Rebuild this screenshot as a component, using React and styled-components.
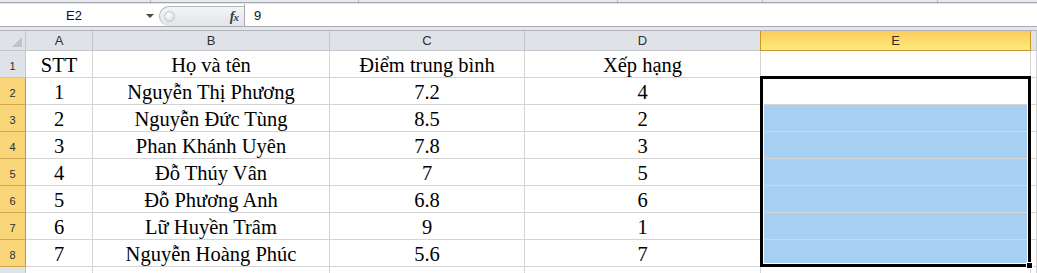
import React from 'react';
import styled, { createGlobalStyle } from 'styled-components';

const Global = createGlobalStyle`
  html, body { margin: 0; padding: 0; background: #fff; overflow: hidden; }
  body { width: 1037px; height: 273px; font-family: "Liberation Sans", Arial, sans-serif; }
  * { box-sizing: border-box; }
`;

const Page = styled.div`
  width: 1037px;
  height: 273px;
  overflow: hidden;
  display: flex;
  flex-direction: column;
  background: #e3e6ea;
`;

const Ribbon = styled.div`
  height: 3px;
  flex: none;
  display: flex;
  background: #e6e9ed;
  border-bottom: 1px solid #a3a6aa;
`;

const RibbonSep = styled.div`
  width: ${p => p.$w}px;
  flex: none;
  border-right: 1px solid #b3b6ba;
`;

const FormulaRow = styled.div`
  height: 23px;
  margin-top: 1px;
  flex: none;
  display: flex;
  background: #fff;
  border-bottom: 1px solid #a8abaf;
`;

const NameBox = styled.div`
  width: 159px;
  flex: none;
  display: flex;
  align-items: center;
  font-size: 13px;
  color: #111;
`;

const NameText = styled.span`
  width: 146px;
  text-align: center;
  padding-left: 2px;
`;

const Arrow = styled.span`
  width: 0;
  height: 0;
  border-left: 4px solid transparent;
  border-right: 4px solid transparent;
  border-top: 4px solid #4a4a4a;
  margin-top: 1px;
`;

const Gripper = styled.div`
  width: 85px;
  flex: none;
  align-self: flex-end;
  height: 20px;
  display: flex;
  align-items: center;
  background: linear-gradient(#f3f4f6, #e3e5e8);
  border: 1px solid #b4b7bb;
  border-bottom: none;
  border-right: none;
  border-radius: 10px 0 0 10px;
`;

const Dot = styled.span`
  width: 11px;
  height: 11px;
  margin-left: 4px;
  border-radius: 50%;
  background: radial-gradient(circle at 40% 35%, #ffffff, #cfd2d6);
  border: 1px solid #c4c7cb;
`;

const Fx = styled.span`
  margin-left: auto;
  margin-right: 6px;
  font-family: "Liberation Serif", "Times New Roman", serif;
  font-style: italic;
  font-weight: bold;
  font-size: 14px;
  color: #3a3a3a;
  letter-spacing: -1px;
`;

const FxSub = styled.span`
  font-size: 11px;
`;

const FormulaInput = styled.div`
  flex: 1;
  display: flex;
  align-items: center;
  padding-left: 9px;
  border-left: 1px solid #a8abaf;
  font-size: 13px;
  color: #111;
`;

const Gap = styled.div`
  height: 3px;
  flex: none;
`;

const Grid = styled.div`
  position: relative;
  flex: none;
  display: grid;
  grid-template-columns: 26px 67px 237px 195px 236px 270px 1fr;
  grid-template-rows: 20px;
  grid-auto-rows: 27px;
  border-top: 1px solid #b0b4b9;
  background: #fff;
`;

const Corner = styled.div`
  background: #dfe3e8;
  border-right: 1px solid #c3c7cc;
  border-bottom: 1px solid #c3c7cc;
  display: flex;
  align-items: flex-end;
  justify-content: flex-end;
  padding: 0 3px 3px 0;
`;

const CornerTri = styled.span`
  width: 0;
  height: 0;
  border-left: 10px solid transparent;
  border-bottom: 10px solid #bfc3c8;
`;

const ColHead = styled.div`
  display: flex;
  align-items: center;
  justify-content: center;
  font-size: 13px;
  color: ${p => (p.$sel ? '#3a2b1a' : '#2e2e2e')};
  background: ${p => (p.$sel ? 'linear-gradient(#f9cc5b, #feea7c)' : '#dfe3e8')};
  border-right: 1px solid ${p => (p.$sel ? '#c8952f' : '#c3c7cc')};
  border-bottom: 1px solid ${p => (p.$sel ? '#c8952f' : '#c3c7cc')};
  ${p => (p.$sel ? 'border-left: 1px solid #c8952f; margin-left: -1px;' : '')}
`;

const RowHead = styled.div`
  display: flex;
  align-items: flex-end;
  justify-content: center;
  padding-bottom: 5px;
  font-size: 11px;
  color: #2e2e2e;
  background: ${p => (p.$sel ? '#f9d67a' : '#dfe3e8')};
  border-right: 1px solid ${p => (p.$sel ? '#c8952f' : '#c3c7cc')};
  border-bottom: 1px solid ${p => (p.$sel ? '#d3a64a' : '#c3c7cc')};
`;

const Cell = styled.div`
  display: flex;
  align-items: center;
  justify-content: center;
  padding-top: 2px;
  font-family: "Liberation Serif", "Times New Roman", serif;
  font-size: 20.5px;
  color: #000;
  white-space: nowrap;
  background: ${p => (p.$fill ? '#a6cff1' : '#fff')};
  border-right: 1px solid #d4d4d4;
  border-bottom: 1px solid #d4d4d4;
`;

const Selection = styled.div`
  position: absolute;
  left: 760px;
  top: 45px;
  width: 271px;
  height: 191px;
  border: 3px solid #000;
  box-shadow: inset 0 0 0 1px #fff;
  pointer-events: none;
`;

const FillHandle = styled.span`
  position: absolute;
  right: -5px;
  bottom: -5px;
  width: 7px;
  height: 7px;
  background: #000;
  border: 1px solid #fff;
`;

const headers = ['A', 'B', 'C', 'D', 'E', ''];

const rows = [
  ['STT', 'Họ và tên', 'Điểm trung bình', 'Xếp hạng'],
  ['1', 'Nguyễn Thị Phương', '7.2', '4'],
  ['2', 'Nguyễn Đức Tùng', '8.5', '2'],
  ['3', 'Phan Khánh Uyên', '7.8', '3'],
  ['4', 'Đỗ Thúy Vân', '7', '5'],
  ['5', 'Đỗ Phương Anh', '6.8', '6'],
  ['6', 'Lữ Huyền Trâm', '9', '1'],
  ['7', 'Nguyễn Hoàng Phúc', '5.6', '7'],
  ['', '', '', ''],
];

export default function App() {
  return (
    <Page>
      <Global />
      <Ribbon>
        <RibbonSep $w={151} />
        <RibbonSep $w={208} />
        <RibbonSep $w={259} />
        <RibbonSep $w={145} />
        <RibbonSep $w={175} />
      </Ribbon>
      <FormulaRow>
        <NameBox>
          <NameText>E2</NameText>
          <Arrow />
        </NameBox>
        <Gripper>
          <Dot />
          <Fx>
            f<FxSub>x</FxSub>
          </Fx>
        </Gripper>
        <FormulaInput>9</FormulaInput>
      </FormulaRow>
      <Gap />
      <Grid>
        <Corner>
          <CornerTri />
        </Corner>
        {headers.map((h, i) => (
          <ColHead key={i} $sel={h === 'E'}>
            {h}
          </ColHead>
        ))}
        {rows.map((r, ri) => {
          const n = ri + 1;
          const sel = n >= 2 && n <= 8;
          return (
            <React.Fragment key={ri}>
              <RowHead $sel={sel}>{n <= 8 ? n : ''}</RowHead>
              {r.map((c, ci) => (
                <Cell key={ci}>{c}</Cell>
              ))}
              <Cell $fill={n >= 3 && n <= 8} />
              <Cell />
            </React.Fragment>
          );
        })}
        <Selection>
          <FillHandle />
        </Selection>
      </Grid>
    </Page>
  );
}
